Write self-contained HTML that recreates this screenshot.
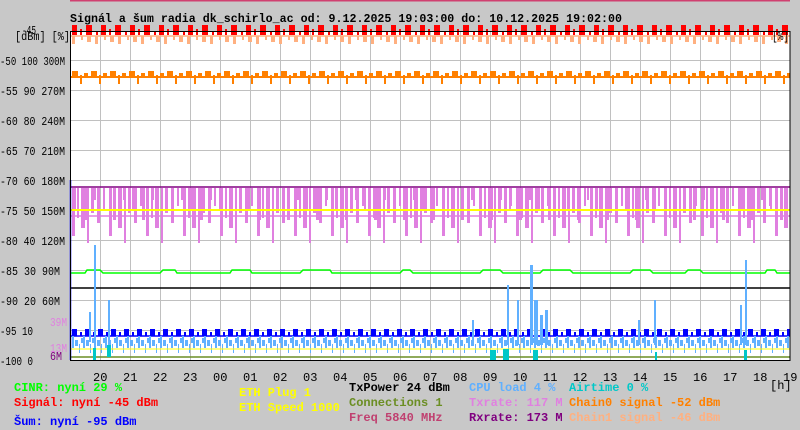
<!DOCTYPE html>
<html><head><meta charset="utf-8"><style>
body{margin:0;background:#c8c8c8;width:800px;height:430px;overflow:hidden;font-family:"Liberation Mono","DejaVu Sans Mono",monospace}
svg{position:absolute;left:0;top:0}
text{font-family:"Liberation Mono","DejaVu Sans Mono",monospace;font-size:12px}
</style></head><body>
<svg width="800" height="430" viewBox="0 0 800 430">
<defs>
<pattern id="mag" x="72" y="188" width="37" height="60" patternUnits="userSpaceOnUse">
<rect x="0" y="0" width="3" height="48" fill="#e080e0"/><rect x="5" y="0" width="2" height="30" fill="#e080e0"/><rect x="9" y="0" width="4" height="40" fill="#e080e0"/><rect x="15" y="0" width="2" height="55" fill="#e080e0"/><rect x="19" y="0" width="3" height="25" fill="#e080e0"/><rect x="25" y="0" width="3" height="35" fill="#e080e0"/><rect x="31" y="0" width="2" height="18" fill="#e080e0"/>
</pattern>
<pattern id="mag2" x="72" y="188" width="29" height="60" patternUnits="userSpaceOnUse">
<rect x="2" y="0" width="2" height="22" fill="#e080e0"/><rect x="12" y="0" width="3" height="32" fill="#e080e0"/><rect x="22" y="0" width="2" height="12" fill="#e080e0"/>
</pattern>
<pattern id="red" x="72" y="25" width="29" height="12" patternUnits="userSpaceOnUse">
<rect x="0" y="0" width="5" height="10" fill="#f00"/><rect x="8" y="4" width="2" height="6" fill="#f00"/><rect x="14" y="0" width="6" height="10" fill="#f00"/><rect x="24" y="6" width="2" height="4" fill="#f00"/>
</pattern>
<pattern id="sal" x="72" y="36" width="23" height="10" patternUnits="userSpaceOnUse">
<rect x="0" y="0" width="3" height="8" fill="#ffb080"/><rect x="9" y="0" width="2" height="4" fill="#ffb080"/><rect x="15" y="0" width="4" height="6" fill="#ffb080"/>
</pattern>
<pattern id="org" x="72" y="70" width="19" height="20" patternUnits="userSpaceOnUse">
<rect x="0" y="1" width="6" height="7" fill="#ff8000"/><rect x="8" y="5" width="2" height="9" fill="#ff8000"/><rect x="12" y="3" width="4" height="5" fill="#ff8000"/>
</pattern>
<pattern id="blu" x="72" y="329" width="13" height="8" patternUnits="userSpaceOnUse">
<rect x="0" y="0" width="5" height="7" fill="#0000ff"/><rect x="8" y="3" width="2" height="4" fill="#0000ff"/>
</pattern>
<pattern id="lb" x="72" y="336" width="11" height="18" patternUnits="userSpaceOnUse">
<rect x="0" y="0" width="2" height="12" fill="#60b0ff"/><rect x="3" y="4" width="3" height="6" fill="#60b0ff"/><rect x="7" y="8" width="1" height="9" fill="#60b0ff"/><rect x="9" y="2" width="2" height="5" fill="#60b0ff"/>
</pattern>
</defs>
<line x1="70" y1="0.5" x2="790" y2="0.5" stroke="#d04070" stroke-width="2"/>
<rect x="71" y="31" width="719" height="329" fill="#fff"/>
<g stroke="#c0c0c0" stroke-width="1">
<path d="M100.5 31V360M130.5 31V360M160.5 31V360M190.5 31V360M220.5 31V360M250.5 31V360M280.5 31V360M310.5 31V360M340.5 31V360M370.5 31V360M400.5 31V360M430.5 31V360M460.5 31V360M490.5 31V360M520.5 31V360M550.5 31V360M580.5 31V360M610.5 31V360M640.5 31V360M670.5 31V360M700.5 31V360M730.5 31V360M760.5 31V360"/>
<path d="M71 60.5H790M71 90.5H790M71 120.5H790M71 150.5H790M71 180.5H790M71 210.5H790M71 240.5H790M71 270.5H790M71 300.5H790M71 330.5H790"/>
</g>
<rect x="72" y="25" width="718" height="10" fill="url(#red)"/>
<rect x="72" y="36" width="718" height="8" fill="url(#sal)"/>
<line x1="71" y1="36" x2="790" y2="36" stroke="#ffb080" stroke-width="1.5"/>
<rect x="72" y="70" width="718" height="14" fill="url(#org)"/>
<line x1="71" y1="77" x2="790" y2="77" stroke="#ff8000" stroke-width="2"/>
<line x1="71" y1="187" x2="790" y2="187" stroke="#800080" stroke-width="1.5"/>
<rect x="72" y="188" width="718" height="55" fill="url(#mag)"/>
<rect x="72" y="188" width="718" height="55" fill="url(#mag2)"/>
<line x1="71" y1="216" x2="790" y2="216" stroke="#e080e0" stroke-width="1.5"/>
<line x1="71" y1="210" x2="790" y2="210" stroke="#ffff00" stroke-width="2"/>
<path d="M71 273H85L87 270H100L103 273H160L163 270H175L177 273H230L232 270H250L252 273H300L303 270H330L332 273H400L403 270H410L413 273H480L483 270H500L503 273H540L543 270H570L573 273H630L633 270H650L653 273H685L688 270H700L703 273H765L767 270H775L777 273H790" stroke="#00ff00" fill="none" stroke-width="1.5"/>
<line x1="71" y1="288" x2="790" y2="288" stroke="#000" stroke-width="1.5"/>
<rect x="72" y="329" width="718" height="7" fill="url(#blu)"/>
<line x1="71" y1="336" x2="790" y2="336" stroke="#0000ff" stroke-width="1.5"/>
<rect x="72" y="336" width="718" height="17" fill="url(#lb)"/>
<line x1="71" y1="349" x2="790" y2="349" stroke="#ffff00" stroke-width="1"/>
<line x1="71" y1="357" x2="790" y2="357" stroke="#6b8e23" stroke-width="1.5"/>
<g fill="#60b0ff">
<rect x="94" y="245" width="2" height="110"/><rect x="108" y="300" width="2" height="50"/><rect x="89" y="312" width="2" height="30"/>
<rect x="507" y="285" width="2" height="60"/><rect x="517" y="300" width="2" height="45"/><rect x="530" y="265" width="3" height="80"/><rect x="534" y="300" width="4" height="45"/><rect x="540" y="315" width="3" height="30"/><rect x="545" y="310" width="3" height="35"/>
<rect x="472" y="320" width="2" height="25"/><rect x="638" y="320" width="2" height="25"/><rect x="654" y="300" width="2" height="45"/><rect x="745" y="260" width="2" height="85"/><rect x="740" y="305" width="2" height="40"/>
</g>
<g fill="#00c8c8">
<rect x="93" y="348" width="3" height="12"/><rect x="107" y="345" width="4" height="12"/><rect x="490" y="350" width="6" height="10"/><rect x="503" y="349" width="6" height="11"/><rect x="533" y="350" width="5" height="10"/><rect x="744" y="350" width="3" height="10"/><rect x="655" y="352" width="2" height="8"/>
</g>
<line x1="70.5" y1="31" x2="70.5" y2="360" stroke="#000"/>
<line x1="70.5" y1="180" x2="70.5" y2="360" stroke="#0000ff" stroke-width="1.5"/>
<rect x="70.5" y="31.5" width="719.5" height="329" fill="none" stroke="#000"/>
<text x="70" y="22" font-weight="bold" font-size="12" textLength="552" lengthAdjust="spacingAndGlyphs">Signál a šum radia dk_schirlo_ac od: 9.12.2025 19:03:00 do: 10.12.2025 19:02:00</text>
<text x="772" y="40" font-size="11" textLength="17" lengthAdjust="spacingAndGlyphs">[%]</text>
<g font-size="11.5">
<text x="22" y="34" textLength="14" lengthAdjust="spacingAndGlyphs">-45</text><text x="15" y="40" textLength="55" lengthAdjust="spacingAndGlyphs">[dBm] [%]</text>
<text x="0" y="65" textLength="65" lengthAdjust="spacingAndGlyphs">-50 100 300M</text>
<text x="0" y="95" textLength="65" lengthAdjust="spacingAndGlyphs">-55 90 270M</text>
<text x="0" y="125" textLength="65" lengthAdjust="spacingAndGlyphs">-60 80 240M</text>
<text x="0" y="155" textLength="65" lengthAdjust="spacingAndGlyphs">-65 70 210M</text>
<text x="0" y="185" textLength="65" lengthAdjust="spacingAndGlyphs">-70 60 180M</text>
<text x="0" y="215" textLength="65" lengthAdjust="spacingAndGlyphs">-75 50 150M</text>
<text x="0" y="245" textLength="65" lengthAdjust="spacingAndGlyphs">-80 40 120M</text>
<text x="0" y="275" textLength="60" lengthAdjust="spacingAndGlyphs">-85 30 90M</text>
<text x="0" y="305" textLength="60" lengthAdjust="spacingAndGlyphs">-90 20 60M</text>
<text x="0" y="335" textLength="33" lengthAdjust="spacingAndGlyphs">-95 10</text>
<text x="0" y="365" textLength="33" lengthAdjust="spacingAndGlyphs">-100 0</text>
<text x="50" y="326" fill="#e080e0" textLength="17" lengthAdjust="spacingAndGlyphs">39M</text>
<text x="50" y="352" fill="#e080e0" textLength="17" lengthAdjust="spacingAndGlyphs">13M</text>
<text x="50" y="360" fill="#800080" textLength="12" lengthAdjust="spacingAndGlyphs">6M</text>
</g>
<g font-size="12">
<text x="93" y="381">20</text><text x="123" y="381">21</text><text x="153" y="381">22</text><text x="183" y="381">23</text><text x="213" y="381">00</text><text x="243" y="381">01</text><text x="273" y="381">02</text><text x="303" y="381">03</text><text x="333" y="381">04</text><text x="363" y="381">05</text><text x="393" y="381">06</text><text x="423" y="381">07</text><text x="453" y="381">08</text><text x="483" y="381">09</text><text x="513" y="381">10</text><text x="543" y="381">11</text><text x="573" y="381">12</text><text x="603" y="381">13</text><text x="633" y="381">14</text><text x="663" y="381">15</text><text x="693" y="381">16</text><text x="723" y="381">17</text><text x="753" y="381">18</text><text x="783" y="381">19</text>
<text x="770" y="389">[h]</text>
</g>
<g font-weight="bold" font-size="11.6">
<text x="14" y="391" fill="#00ff00">CINR: nyní 29 %</text>
<text x="14" y="406" fill="#ff0000">Signál: nyní -45 dBm</text>
<text x="14" y="425" fill="#0000ff">Šum: nyní -95 dBm</text>
<text x="239" y="396" fill="#ffff00">ETH Plug 1</text>
<text x="239" y="411" fill="#ffff00">ETH Speed 1000</text>
<text x="349" y="391" fill="#000">TxPower 24 dBm</text>
<text x="349" y="406" fill="#6b8e23">Connections 1</text>
<text x="349" y="421" fill="#c04070">Freq 5840 MHz</text>
<text x="469" y="391" fill="#60b0ff">CPU load 4 %</text>
<text x="469" y="406" fill="#e080e0">Txrate: 117 M</text>
<text x="469" y="421" fill="#800080">Rxrate: 173 M</text>
<text x="569" y="391" fill="#00c8c8">Airtime 0 %</text>
<text x="569" y="406" fill="#ff8000">Chain0 signal -52 dBm</text>
<text x="569" y="421" fill="#ffb080">Chain1 signal -46 dBm</text>
</g>
</svg>
</body></html>
